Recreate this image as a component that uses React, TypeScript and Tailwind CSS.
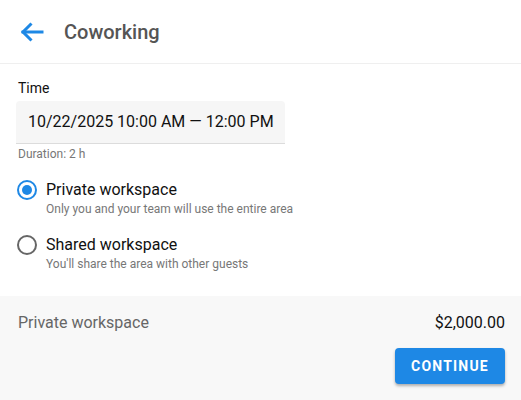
export default function App() {
    return (
        <div className="w-[521px] h-[400px] bg-white flex flex-col overflow-hidden font-['Roboto',sans-serif]">
            {/* Header */}
            <div className="h-[64px] flex items-center gap-[20px] pl-[20px] border-b border-[#efefef] shrink-0">
                <svg width="24" height="22" viewBox="0 0 24 22" fill="none" stroke="#1e88e5" strokeWidth="3" strokeLinecap="square">
                    <path d="M3 11H22" />
                    <path d="M11.5 2.5L3 11l8.5 8.5" strokeLinecap="butt" />
                </svg>
                <h1 className="text-[20px] font-medium text-[#555]">Coworking</h1>
            </div>

            {/* Body */}
            <div className="flex-1 px-4 pt-[14px]">
                <label className="block text-[14px] text-[#111] mb-[3px] pl-[2px] leading-[20px]">Time</label>
                <div className="w-[269px] h-[43px] bg-[#f6f6f6] rounded-t-[4px] border-b border-[#dcdcdc] flex items-center px-3">
                    <span className="text-[16px] text-[#111] leading-none whitespace-nowrap">10/22/2025 10:00 AM — 12:00 PM</span>
                </div>
                <p className="text-[12px] text-[#777] mt-[2px] pl-[2px] leading-[16px]">Duration: 2 h</p>

                <div className="mt-[17px] flex flex-col gap-[17px]">
                    <div className="flex items-start gap-[9px]">
                        <div className="w-[20px] h-[20px] rounded-full border-2 border-[#1e88e5] flex items-center justify-center mt-[1px] ml-[1px]">
                            <div className="w-[10px] h-[10px] rounded-full bg-[#1e88e5]" />
                        </div>
                        <div>
                            <div className="text-[16px] text-[#111] leading-[22px]">Private workspace</div>
                            <div className="text-[12px] text-[#777] leading-[16px]">Only you and your team will use the entire area</div>
                        </div>
                    </div>
                    <div className="flex items-start gap-[9px]">
                        <div className="w-[20px] h-[20px] rounded-full border-2 border-[#666] mt-[1px] ml-[1px]" />
                        <div>
                            <div className="text-[16px] text-[#111] leading-[22px]">Shared workspace</div>
                            <div className="text-[12px] text-[#777] leading-[16px]">You'll share the area with other guests</div>
                        </div>
                    </div>
                </div>
            </div>

            {/* Footer */}
            <div className="h-[104px] bg-[#f8f8f8] shrink-0 px-4 pt-[15px]">
                <div className="flex justify-between items-center pl-[2px]">
                    <span className="text-[16px] text-[#666]">Private workspace</span>
                    <span className="text-[16px] text-[#111]">$2,000.00</span>
                </div>
                <div className="flex justify-end mt-[13px]">
                    <button className="w-[110px] h-[36px] rounded-[4px] bg-[#1e88e5] text-white text-[14px] font-bold tracking-[1.2px] uppercase shadow-[0_2px_3px_rgba(0,0,0,0.3)]">
                        Continue
                    </button>
                </div>
            </div>
        </div>
    );
}
